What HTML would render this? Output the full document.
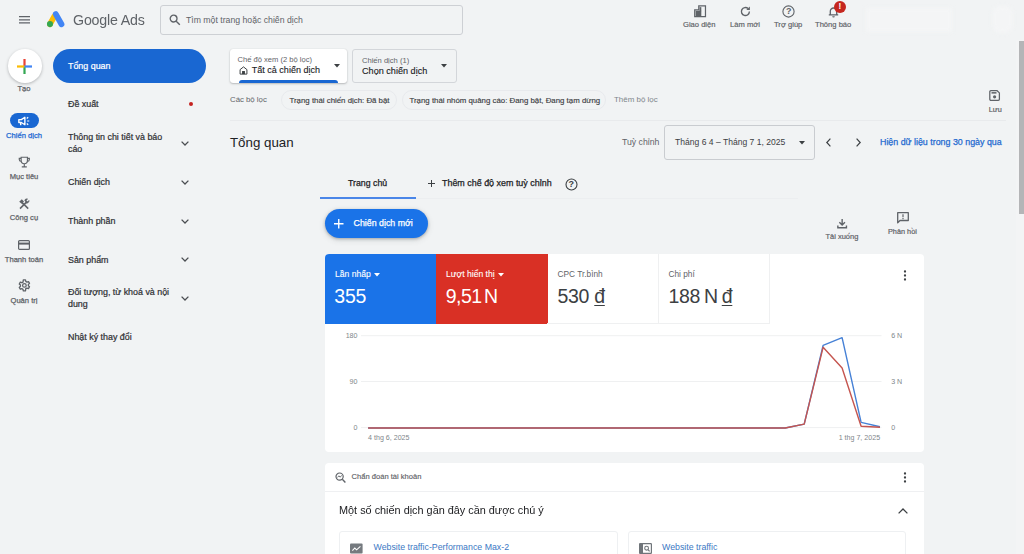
<!DOCTYPE html>
<html lang="vi">
<head>
<meta charset="utf-8">
<title>Google Ads</title>
<style>
*{box-sizing:border-box;margin:0;padding:0}
html,body{width:1024px;height:554px;overflow:hidden;background:#f1f3f4;font-family:"Liberation Sans",sans-serif;color:#202124}
.a{position:absolute;white-space:nowrap}
.t{position:absolute;white-space:nowrap;line-height:1;transform-origin:0 50%}
svg{position:absolute;overflow:visible}
.nav{font-size:8.9px;color:#303134;-webkit-text-stroke:.22px}
.rl{font-size:7.6px;color:#5f6368;text-align:center;width:48px;left:0;-webkit-text-stroke:.25px}
.md{-webkit-text-stroke:.25px}
.sm{font-size:8px;color:#5f6368}
</style>
</head>
<body>
<!-- HEADER -->
<div id="hdr">
  <svg style="left:19px;top:15px" width="11" height="9" viewBox="0 0 11 9"><path d="M0 1.7h11M0 4.8h11M0 7.9h11" stroke="#5f6368" stroke-width="1.2" fill="none"/></svg>
  <!-- logo -->
  <svg style="left:40px;top:5px" width="30" height="26" viewBox="40 5 30 26">
    <path d="M50 24.100 L54.300 16.400" stroke="#fbbc04" stroke-width="5.800" stroke-linecap="round"/>
    <path d="M55.800 14.100 L61.500 24.200" stroke="#4285f4" stroke-width="5.800" stroke-linecap="round"/>
    <circle cx="50" cy="24.100" r="3.050" fill="#34a853"/>
  </svg>
  <div class="t" style="left:72.500px;top:12.200px;font-size:15.200px;color:#5f6368;letter-spacing:-0.2px;transform:scaleX(.937)">Google Ads</div>
  <div class="a" style="left:160px;top:5.300px;width:303px;height:29.600px;border:1px solid #cdd0d4;border-radius:3px;background:#f1f3f4"></div>
  <svg style="left:169px;top:14px" width="12" height="12" viewBox="0 0 12 12"><circle cx="4.6" cy="4.6" r="3.4" stroke="#5f6368" stroke-width="1.3" fill="none"/><path d="M7.2 7.2 L10.8 10.8" stroke="#5f6368" stroke-width="1.4"/></svg>
  <div class="t" style="left:186px;top:15.7px;font-size:8.7px;color:#5f6368">Tìm một trang hoặc chiến dịch</div>
</div>

<!-- LEFT RAIL -->
<div id="rail">
  <div class="a" style="left:8px;top:49.3px;width:33.5px;height:33.5px;border-radius:50%;background:#fff;box-shadow:0 1px 3px rgba(60,64,67,.35)"></div>
  <svg style="left:17.2px;top:58.5px" width="15" height="15" viewBox="0 0 15 15">
    <rect x="6.4" y="0" width="2.2" height="7.5" fill="#ea4335"/>
    <rect x="6.4" y="7.5" width="2.2" height="7.5" fill="#34a853"/>
    <rect x="0" y="6.4" width="7.5" height="2.2" fill="#fbbc04"/>
    <rect x="7.5" y="6.4" width="7.5" height="2.2" fill="#4285f4"/>
  </svg>
  <div class="t rl" style="top:85px">Tạo</div>

  <div class="a" style="left:9.5px;top:113px;width:29.5px;height:14.5px;border-radius:8px;background:#1967d2"></div>
  <svg style="left:17.500px;top:115.500px" width="12.500" height="10.500" viewBox="0 0 12 10"><path d="M.8 3.400h2.400L6.600 1.200v7.200L3.200 6.200H.8z" fill="none" stroke="#fff" stroke-width="1.300" stroke-linejoin="round"/><path d="M2.600 6.400v2.400" stroke="#fff" stroke-width="1.400"/><path d="M8.400 2.400l1.400-1.200M8.800 4.800h2M8.400 7.200l1.400 1.200" stroke="#fff" stroke-width="1.100"/></svg>
  <div class="t rl" style="top:132px;color:#1967d2">Chiến dịch</div>

  <svg style="left:17.600px;top:156px" width="12.600" height="12.600" viewBox="0 0 12 12"><path d="M3 1.2h6v3.2a3 3 0 0 1-6 0zM3 2.2H1.2v1.2A1.8 1.8 0 0 0 3 5.2M9 2.2h1.800v1.2A1.8 1.8 0 0 1 9 5.2M6 7.4v2.400M3.600 10.400h4.800" fill="none" stroke="#5f6368" stroke-width="1.1"/></svg>
  <div class="t rl" style="top:173px">Mục tiêu</div>

  <svg style="left:18px;top:197.500px" width="12" height="12" viewBox="0 0 12 12"><path d="M2 10.600 8.200 4.400" stroke="#5f6368" stroke-width="1.500" fill="none"/><path d="M6.600 2.600a2.300 2.300 0 0 1 3-1.600L8.200 2.400l1.400 1.400L11 2.400a2.300 2.300 0 0 1-3 2.600" fill="#5f6368" stroke="#5f6368" stroke-width=".6"/><path d="M10.200 10.600 5 5.400" stroke="#5f6368" stroke-width="1.500" fill="none"/><path d="M1.200 3.800 3.800 1.200 6 3.400 5 4.400 5.800 5.200 4.600 6.400z" fill="#5f6368"/></svg>
  <div class="t rl" style="top:214px">Công cụ</div>

  <svg style="left:18px;top:239.600px" width="12" height="10" viewBox="0 0 12 10"><rect x=".6" y=".6" width="10.800" height="8.800" rx="1" fill="none" stroke="#5f6368" stroke-width="1.2"/><rect x=".6" y="2.600" width="10.800" height="2" fill="#5f6368"/></svg>
  <div class="t rl" style="top:255.800px">Thanh toán</div>

  <svg style="left:17.700px;top:279px" width="12.800" height="12.800" viewBox="0 0 12 12"><circle cx="6" cy="6" r="1.700" fill="none" stroke="#5f6368" stroke-width="1.200"/><path d="M5 .8h2l.3 1.500 1.100.6 1.400-.5 1 1.700-1.100 1v1.200l1.100 1-1 1.700-1.400-.5-1.100.6L7 11.200H5l-.3-1.500-1.100-.6-1.400.5-1-1.700 1.100-1V5.700l-1.100-1 1-1.700 1.400.5 1.100-.6z" fill="none" stroke="#5f6368" stroke-width="1.250" stroke-linejoin="round"/></svg>
  <div class="t rl" style="top:297px">Quản trị</div>
</div>

<!-- SIDE NAV -->
<div id="nav">
  <div class="a" style="left:53px;top:49px;width:153px;height:33.5px;border-radius:17px;background:#1967d2"></div>
  <div class="t nav" style="left:68px;top:61.6px;color:#fff">Tổng quan</div>
  <div class="t nav" style="left:68px;top:100px">Đề xuất</div>
  <div class="a" style="left:189px;top:102px;width:4px;height:4px;border-radius:50%;background:#c5221f"></div>
  <div class="t nav" style="left:68px;top:133px">Thông tin chi tiết và báo</div>
  <div class="t nav" style="left:68px;top:145px">cáo</div>
  <div class="t nav" style="left:68px;top:178px">Chiến dịch</div>
  <div class="t nav" style="left:68px;top:216.8px">Thành phần</div>
  <div class="t nav" style="left:68px;top:255.6px">Sản phẩm</div>
  <div class="t nav" style="left:68px;top:288px">Đối tượng, từ khoá và nội</div>
  <div class="t nav" style="left:68px;top:300.200px">dung</div>
  <div class="t nav" style="left:68px;top:332.600px">Nhật ký thay đổi</div>
  <svg style="left:181px;top:141px" width="8" height="5" viewBox="0 0 8 5"><path d="M.6.6 4 4 7.400.6" fill="none" stroke="#4a4d51" stroke-width="1.300"/></svg>
  <svg style="left:181px;top:180px" width="8" height="5" viewBox="0 0 8 5"><path d="M.6.6 4 4 7.400.6" fill="none" stroke="#4a4d51" stroke-width="1.300"/></svg>
  <svg style="left:181px;top:219px" width="8" height="5" viewBox="0 0 8 5"><path d="M.6.6 4 4 7.400.6" fill="none" stroke="#4a4d51" stroke-width="1.300"/></svg>
  <svg style="left:181px;top:257px" width="8" height="5" viewBox="0 0 8 5"><path d="M.6.6 4 4 7.400.6" fill="none" stroke="#4a4d51" stroke-width="1.300"/></svg>
  <svg style="left:181px;top:296px" width="8" height="5" viewBox="0 0 8 5"><path d="M.6.6 4 4 7.400.6" fill="none" stroke="#4a4d51" stroke-width="1.300"/></svg>
</div>

<!-- TOP RIGHT ICONS -->
<div id="tr">
  <!-- Giao dien -->
  <svg style="left:693.500px;top:5.200px" width="12.200" height="12.400" viewBox="0 0 12 12"><path d="M.7 4.600H4.700V.7H11.300V11.300H.7z" fill="none" stroke="#5f6368" stroke-width="1.200"/><rect x="1.600" y="5.600" width="5.600" height="5.200" fill="#5f6368"/><rect x="5.400" y="2" width="1.800" height="4" fill="#5f6368"/></svg>
  <div class="t sm" style="left:683px;top:21px;font-size:7.600px;-webkit-text-stroke:.18px">Giao diện</div>
  <!-- Lam moi -->
  <svg style="left:739.500px;top:6.200px" width="11" height="11" viewBox="0 0 11 11"><path d="M9.400 5.600A4 4 0 1 1 8.100 2.600" fill="none" stroke="#5f6368" stroke-width="1.400"/><path d="M9.900 .4V4H6.300z" fill="#5f6368"/></svg>
  <div class="t sm" style="left:730px;top:21px;font-size:7.600px;-webkit-text-stroke:.18px">Làm mới</div>
  <!-- Tro giup -->
  <svg style="left:782px;top:5px" width="13" height="13" viewBox="0 0 13 13"><circle cx="6.500" cy="6.500" r="5.600" fill="none" stroke="#5f6368" stroke-width="1.100"/></svg>
  <div class="t" style="left:786px;top:7px;font-size:9px;font-weight:bold;color:#5f6368">?</div>
  <div class="t sm" style="left:774px;top:21px;font-size:7.600px;-webkit-text-stroke:.18px">Trợ giúp</div>
  <!-- Thong bao -->
  <svg style="left:827.500px;top:6px" width="11" height="12" viewBox="0 0 11 12"><path d="M2.300 8.600V5.200a3.200 3.200 0 0 1 6.400 0V8.600M.8 8.900h9.400" fill="none" stroke="#5f6368" stroke-width="1.300"/><path d="M4.200 10.200h2.600a1.300 1.300 0 0 1-2.600 0z" fill="#5f6368"/></svg>
  <div class="a" style="left:834px;top:.9px;width:11.800px;height:11.800px;border-radius:50%;background:#c5271f"></div>
  <div class="t" style="left:838.600px;top:2.800px;font-size:8.200px;font-weight:bold;color:#fff">!</div>
  <div class="t sm" style="left:815px;top:21px;font-size:7.600px;-webkit-text-stroke:.18px">Thông báo</div>
  <!-- blurred account -->
  <div class="a" style="left:866px;top:8px;width:86px;height:24px;background:#f4f5f6;filter:blur(2px)"></div><div class="a" style="left:992px;top:6px;width:21px;height:27px;background:#f4f5f6;filter:blur(2px);border-radius:8px"></div>
  <!-- scrollbar -->
  <div class="a" style="left:1016px;top:40px;width:8px;height:514px;background:#f3f4f5"></div><div class="a" style="left:1019px;top:41px;width:5px;height:173px;background:#b4b5b7"></div>
</div>

<!-- MAIN -->
<div id="main">
  <!-- dropdown 1 -->
  <div class="a" style="left:230px;top:49px;width:117px;height:34px;border-radius:3px;background:#fff;box-shadow:0 1px 2px rgba(60,64,67,.3),0 0 1px rgba(60,64,67,.2);overflow:hidden"><div style="position:absolute;left:9px;right:9px;bottom:0;height:3px;background:#1967d2;border-radius:3px 3px 0 0"></div></div>
  <div class="t" style="left:237.500px;top:56px;font-size:7.580px;color:#5f6368">Chế độ xem (2 bộ lọc)</div>
  <svg style="left:238.500px;top:66.200px" width="9" height="9" viewBox="0 0 10 10"><path d="M1.200 9V4L5 1l3.800 3v5z" fill="none" stroke="#3c4043" stroke-width="1.100"/><rect x="3.400" y="5.600" width="3.200" height="3.400" fill="#3c4043"/></svg>
  <div class="t" style="left:251.800px;top:66.300px;font-size:9.030px;color:#202124;-webkit-text-stroke:.12px">Tất cả chiến dịch</div>
  <svg style="left:334px;top:64px" width="6" height="4" viewBox="0 0 6 4"><path d="M0 0h6L3 3.500z" fill="#3c4043"/></svg>
  <!-- dropdown 2 -->
  <div class="a" style="left:352px;top:48.800px;width:104.800px;height:33.800px;border-radius:3px;border:1px solid #d3d6da"></div>
  <div class="t" style="left:362px;top:56.500px;font-size:7.580px;color:#5f6368">Chiến dịch (1)</div>
  <div class="t" style="left:362px;top:66.500px;font-size:9.120px;color:#202124;-webkit-text-stroke:.12px">Chọn chiến dịch</div>
  <svg style="left:441px;top:64px" width="6" height="4" viewBox="0 0 6 4"><path d="M0 0h6L3 3.500z" fill="#3c4043"/></svg>
  <!-- filters -->
  <div class="t" style="left:230px;top:96.400px;font-size:7.800px;color:#5f6368">Các bộ lọc</div>
  <div class="a" style="left:281px;top:90px;width:116px;height:20px;border-radius:10px;border:1px solid #e8eaed"></div>
  <div class="t" style="left:289.500px;top:96.500px;font-size:7.850px;color:#3c4043;-webkit-text-stroke:.15px">Trạng thái chiến dịch: Đã bật</div>
  <div class="a" style="left:402px;top:90px;width:204px;height:20px;border-radius:10px;border:1px solid #e8eaed"></div>
  <div class="t" style="left:409.500px;top:96.500px;font-size:7.850px;color:#3c4043;-webkit-text-stroke:.15px">Trạng thái nhóm quảng cáo: Đang bật, Đang tạm dừng</div>
  <div class="t" style="left:614px;top:96px;font-size:7.950px;color:#80868b">Thêm bộ lọc</div>
  <!-- save -->
  <svg style="left:989.400px;top:89.900px" width="11.200" height="11" viewBox="0 0 11 11"><path d="M1.800.7H8l2.300 2.200V9.200a1.100 1.100 0 0 1-1.100 1.100H1.800A1.100 1.100 0 0 1 .7 9.200V1.800A1.100 1.100 0 0 1 1.800.7z" fill="none" stroke="#5f6368" stroke-width="1.250"/><rect x="2.400" y="2.100" width="5" height="1.500" fill="#5f6368"/><circle cx="5.500" cy="6.800" r="1.600" fill="#5f6368"/></svg>
  <div class="t" style="left:988.800px;top:106px;font-size:7.300px;color:#5f6368;-webkit-text-stroke:.2px">Lưu</div>
  <div class="a" style="left:230px;top:120px;width:776px;height:1px;background:#e8eaec"></div>
  <!-- title row -->
  <div class="t" style="left:230px;top:136px;font-size:13.300px;color:#202124">Tổng quan</div>
  <div class="t" style="left:622px;top:138px;font-size:8.700px;color:#5f6368">Tuỳ chỉnh</div>
  <div class="a" style="left:664px;top:125px;width:151px;height:35px;border:1px solid #c9ccd0;border-radius:3px"></div>
  <div class="t" style="left:675px;top:138px;font-size:8.570px;color:#3c4043">Tháng 6 4 – Tháng 7 1, 2025</div>
  <svg style="left:799px;top:141px" width="6" height="4" viewBox="0 0 6 4"><path d="M0 0h6L3 3.500z" fill="#3c4043"/></svg>
  <svg style="left:826px;top:138px" width="5" height="9" viewBox="0 0 5 9"><path d="M4.400.6.800 4.500 4.400 8.400" fill="none" stroke="#3c4043" stroke-width="1.200"/></svg>
  <svg style="left:856px;top:138px" width="5" height="9" viewBox="0 0 5 9"><path d="M.6.6 4.200 4.500.6 8.400" fill="none" stroke="#3c4043" stroke-width="1.200"/></svg>
  <div class="t md" style="left:880px;top:138px;font-size:8.870px;color:#1f6ad0">Hiện dữ liệu trong 30 ngày qua</div>
  <!-- tabs -->
  <div class="a" style="left:320px;top:198px;width:478px;height:1px;background:#eceef0"></div>
  <div class="a" style="left:320px;top:197px;width:96px;height:2px;background:#4a86e8"></div>
  <div class="t md" style="left:348px;top:179px;font-size:8.780px;color:#202124">Trang chủ</div>
  <svg style="left:428px;top:180px" width="7" height="7" viewBox="0 0 7 7"><path d="M3.500 0v7M0 3.500h7" stroke="#3c4043" stroke-width="1"/></svg>
  <div class="t md" style="left:442px;top:179px;font-size:8.930px;color:#202124">Thêm chế độ xem tuỳ chỉnh</div>
  <svg style="left:564.500px;top:177.500px" width="13" height="13" viewBox="0 0 13 13"><circle cx="6.500" cy="6.500" r="5.500" fill="none" stroke="#3c4043" stroke-width="1.100"/></svg>
  <div class="t" style="left:568.500px;top:179.500px;font-size:9px;font-weight:bold;color:#3c4043">?</div>
  <!-- button -->
  <div class="a" style="left:324.700px;top:208.800px;width:103.500px;height:29px;border-radius:15px;background:#1a73e8;box-shadow:0 1px 3px rgba(60,64,67,.35),0 2px 6px rgba(60,64,67,.15)"></div>
  <svg style="left:334.200px;top:218.800px" width="9.500" height="9.500" viewBox="0 0 9 9"><path d="M4.500 0v9M0 4.500h9" stroke="#fff" stroke-width="1.300"/></svg>
  <div class="t md" style="left:353.500px;top:219px;font-size:8.830px;color:#fff">Chiến dịch mới</div>
  <!-- download / feedback -->
  <svg style="left:837px;top:217.500px" width="10.300" height="11" viewBox="0 0 10 11"><path d="M5 1v5.800M2.200 4.200 5 7l2.800-2.800" fill="none" stroke="#5f6368" stroke-width="1.400"/><path d="M.7 7.400V9.800H9.300V7.400" fill="none" stroke="#5f6368" stroke-width="1.400"/></svg>
  <div class="t" style="left:825.500px;top:233px;font-size:7.480px;color:#5f6368;-webkit-text-stroke:.2px">Tải xuống</div>
  <svg style="left:896.600px;top:212.200px" width="12" height="12" viewBox="0 0 12 12"><path d="M.7.700h10.600v7.800H3L.7 10.800z" fill="none" stroke="#5f6368" stroke-width="1.300" stroke-linejoin="round"/><path d="M6 2.300v2.900M6 6v1.200" stroke="#5f6368" stroke-width="1.200"/></svg>
  <div class="t" style="left:888px;top:228px;font-size:7.300px;color:#5f6368;-webkit-text-stroke:.2px">Phản hồi</div>
</div>

<!-- CARD 1 -->
<div id="card1">
  <div class="a" style="left:325px;top:253.500px;width:599.300px;height:198px;background:#fff;border-radius:4px;overflow:hidden">
    <div class="a" style="left:0;top:0;width:111.400px;height:70px;background:#1a73e8"></div>
    <div class="a" style="left:111.400px;top:0;width:111.400px;height:70px;background:#d93025"></div>
    <div class="a" style="left:333px;top:0;width:1px;height:69px;background:#eff0f1"></div>
    <div class="a" style="left:444px;top:0;width:1px;height:69px;background:#eff0f1"></div>
    <div class="a" style="left:222px;top:69px;width:223px;height:1px;background:#eff0f1"></div>
  </div>
  <div class="t" style="left:335px;top:270px;font-size:8.600px;color:#fff;-webkit-text-stroke:.1px">Lần nhấp</div>
  <svg style="left:374px;top:272.500px" width="6" height="4" viewBox="0 0 6 4"><path d="M0 0h6L3 3.400z" fill="#fff"/></svg>
  <div class="t" style="left:334.300px;top:287px;font-size:19.500px;color:#fff;letter-spacing:-.2px">355</div>
  <div class="t" style="left:446px;top:270px;font-size:8.600px;color:#fff;-webkit-text-stroke:.1px">Lượt hiển thị</div>
  <svg style="left:498px;top:272.500px" width="6" height="4" viewBox="0 0 6 4"><path d="M0 0h6L3 3.400z" fill="#fff"/></svg>
  <div class="t" style="left:445.800px;top:287px;font-size:19.500px;color:#fff;letter-spacing:-.55px;word-spacing:-2.500px">9,51 N</div>
  <div class="t" style="left:557.500px;top:270.300px;font-size:8.300px;color:#5f6368">CPC Tr.bình</div>
  <div class="t" style="left:557.500px;top:287px;font-size:19.500px;color:#3c4043;letter-spacing:-.3px">530 <span style="text-decoration:underline;text-decoration-thickness:1px;text-underline-offset:2px">đ</span></div>
  <div class="t" style="left:668.500px;top:270.300px;font-size:8.300px;color:#5f6368">Chi phí</div>
  <div class="t" style="left:668.500px;top:287px;font-size:19.500px;color:#3c4043;letter-spacing:-.3px;word-spacing:-1.200px">188 N <span style="text-decoration:underline;text-decoration-thickness:1px;text-underline-offset:2px">đ</span></div>
  <svg style="left:903px;top:270px" width="4" height="11" viewBox="0 0 4 11"><circle cx="2" cy="1.500" r="1.150" fill="#3c4043"/><circle cx="2" cy="5.500" r="1.150" fill="#3c4043"/><circle cx="2" cy="9.500" r="1.150" fill="#3c4043"/></svg>
  <!-- chart -->
  <svg style="left:0;top:0" width="1024" height="554" viewBox="0 0 1024 554">
    <path d="M361 335.700H881.500M361 381.500H881.500M361 427.600H881.500" stroke="#eff0f1" stroke-width="1" fill="none"/>
    <polyline points="368.1,428 785.2,428 804.2,424.1 823.1,345.3 842.1,337.7 861.1,422.4 880.0,426.7" fill="none" stroke="#4681d6" stroke-width="1.400" stroke-linejoin="round"/>
    <polyline points="368.1,428 785.2,428 804.2,424.1 823.1,347.3 842.1,368 861.1,426.2 880.0,427.2" fill="none" stroke="#c5554f" stroke-width="1.400" stroke-linejoin="round"/>
    <g font-family="Liberation Sans, sans-serif" font-size="7.100" fill="#80868b">
      <text x="357.500" y="338.300" text-anchor="end">180</text>
      <text x="357.500" y="384.100" text-anchor="end">90</text>
      <text x="357.500" y="430.300" text-anchor="end">0</text>
      <text x="891.200" y="338.300">6 N</text>
      <text x="891.200" y="384.100">3 N</text>
      <text x="891.200" y="430.300">0</text>
      <text x="368.100" y="440.200">4 thg 6, 2025</text>
      <text x="880.100" y="440.200" text-anchor="end">1 thg 7, 2025</text>
    </g>
  </svg>
</div>
<!-- CARD 2 -->
<div id="card2">
  <div class="a" style="left:325px;top:463px;width:599px;height:100px;background:#fff;border-radius:4px 4px 0 0"></div>
  <svg style="left:335px;top:472px" width="11" height="11" viewBox="0 0 11 11"><circle cx="4.600" cy="4.600" r="3.600" fill="none" stroke="#5f6368" stroke-width="1.200"/><path d="M7.300 7.300 10.400 10.400" stroke="#5f6368" stroke-width="1.400"/><path d="M2.600 5.400 3.900 3.800 5.200 5.200 6.600 3.400" fill="none" stroke="#5f6368" stroke-width=".9"/></svg>
  <div class="t" style="left:351.600px;top:473px;font-size:7.570px;color:#5f6368;-webkit-text-stroke:.15px">Chẩn đoán tài khoản</div>
  <svg style="left:903px;top:472px" width="4" height="11" viewBox="0 0 4 11"><circle cx="2" cy="1.500" r="1.150" fill="#3c4043"/><circle cx="2" cy="5.500" r="1.150" fill="#3c4043"/><circle cx="2" cy="9.500" r="1.150" fill="#3c4043"/></svg>
  <div class="a" style="left:325px;top:491.300px;width:599px;height:1px;background:#eff0f2"></div>
  <div class="t" style="left:339.300px;top:505.200px;font-size:11.500px;color:#202124;transform:scaleX(.945)">Một số chiến dịch gần đây cần được chú ý</div>
  <svg style="left:898px;top:508px" width="10" height="6" viewBox="0 0 10 6"><path d="M.6 5.400 5 1 9.400 5.400" fill="none" stroke="#3c4043" stroke-width="1.300"/></svg>
  <div class="a" style="left:339px;top:530.500px;width:278.500px;height:40px;border:1px solid #eef0f2;border-radius:3px"></div>
  <div class="a" style="left:627.500px;top:530.500px;width:278.500px;height:40px;border:1px solid #eef0f2;border-radius:3px"></div>
  <svg style="left:350px;top:543px" width="13" height="11" viewBox="0 0 13 11"><rect x="0" y=".4" width="12.600" height="10.200" rx="1" fill="#757a7f"/><path d="M2.400 7.600 4.800 5 6.600 6.800 10.400 3.400" fill="none" stroke="#fff" stroke-width="1.100"/></svg>
  <div class="t" style="left:373.500px;top:542.500px;font-size:8.800px;color:#3b78c4">Website traffic-Performance Max-2</div>
  <svg style="left:639px;top:543px" width="13" height="11" viewBox="0 0 13 11"><rect x=".6" y=".6" width="11.800" height="9.800" rx=".6" fill="none" stroke="#70757a" stroke-width="1.200"/><rect x=".6" y=".6" width="3.400" height="9.800" fill="#70757a"/><circle cx="7.600" cy="5.200" r="1.900" fill="none" stroke="#70757a" stroke-width="1.100"/><path d="M9 6.600 10.600 8.400" stroke="#70757a" stroke-width="1.200"/></svg>
  <div class="t" style="left:662px;top:542.500px;font-size:8.800px;color:#3b78c4">Website traffic</div>
</div>

</body>
</html>
